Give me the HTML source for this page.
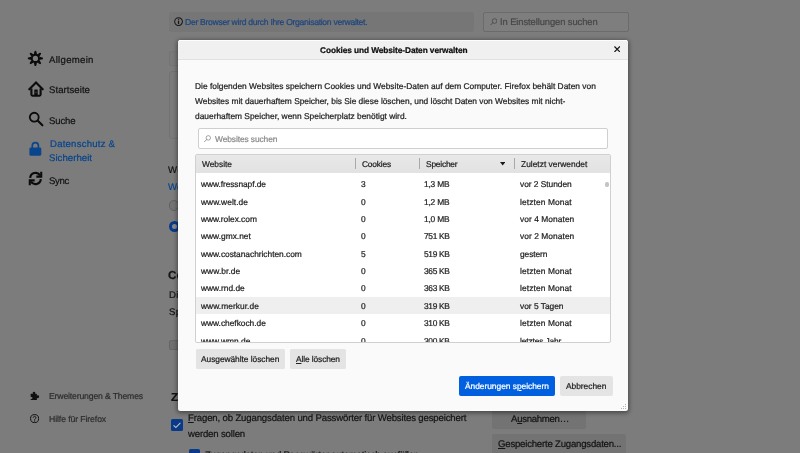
<!DOCTYPE html>
<html lang="de">
<head>
<meta charset="utf-8">
<title>Einstellungen</title>
<style>
html,body{margin:0;padding:0;}
body{width:800px;height:453px;overflow:hidden;position:relative;background:#7c7c7c;font-family:"Liberation Sans",sans-serif;}
.t{position:absolute;text-rendering:geometricPrecision;will-change:transform;-webkit-text-stroke:0.22px;white-space:pre;line-height:1;font-family:"Liberation Sans",sans-serif;}
.t u{text-decoration:underline;text-underline-offset:1px;text-decoration-thickness:0.6px;}
.abs{position:absolute;}
#clip{position:absolute;left:0;top:0;width:800px;height:342px;overflow:hidden;}
</style>
</head>
<body>
<!-- ===== dimmed page behind ===== -->
<!-- policy banner -->
<div class="abs" style="left:169.4px;top:12px;width:304.3px;height:19.6px;background:#767676;border-radius:2px;"></div>
<!-- search box -->
<div class="abs" style="left:483.4px;top:12px;width:145.8px;height:20px;box-sizing:border-box;border:1px solid #6b6b6b;border-radius:2px;background:#7e7e7e;"></div>
<!-- cards behind dialog left edge -->
<div class="abs" style="left:168.5px;top:50.5px;width:300px;height:15.5px;box-sizing:border-box;border:1px solid #747474;border-radius:2px;background:#797979;"></div>
<div class="abs" style="left:168.5px;top:71px;width:300px;height:68px;box-sizing:border-box;border:1px solid #727272;border-radius:3px;background:#7a7a7a;"></div>
<!-- radios -->
<div class="abs" style="left:168.5px;top:200px;width:10.6px;height:10.6px;box-sizing:border-box;border:1px solid #5f5f5f;border-radius:50%;background:#747474;"></div>
<div class="abs" style="left:168.5px;top:221px;width:11.4px;height:11.4px;box-sizing:border-box;border:3.2px solid #093a8a;border-radius:50%;background:#8a8a8a;"></div>
<!-- small button behind -->
<div class="abs" style="left:169.2px;top:339.5px;width:60px;height:10.5px;box-sizing:border-box;border:1px solid #666666;border-radius:2px;background:#707070;"></div>
<!-- checkbox 1 -->
<div class="abs" style="left:171.1px;top:419.3px;width:11.7px;height:11.7px;border-radius:1.6px;background:#093a8a;"></div>
<svg class="abs" style="left:171.1px;top:419.3px" width="11.7" height="11.7" viewBox="0 0 11.7 11.7"><path d="M2.5 6.3 L4.9 8.5 L9.4 4.0" fill="none" stroke="#bcbcbc" stroke-width="1.05"/></svg>
<!-- checkbox 2 (cut off) -->
<div class="abs" style="left:189px;top:448.9px;width:11.2px;height:11.7px;border-radius:1.6px;background:#093a8a;"></div>
<!-- page buttons -->
<div class="abs" style="left:492px;top:409px;width:94px;height:19.5px;border-radius:2px;background:#737373;"></div>
<div class="abs" style="left:492px;top:434.3px;width:134.2px;height:19.5px;border-radius:2px;background:#737373;"></div>

<!-- sidebar icons -->
<!-- gear -->
<svg class="abs" style="left:27.1px;top:50.05px" width="16.8" height="16.8" viewBox="-8 -8 16 16">
 <circle r="3.45" fill="none" stroke="#0b0b0b" stroke-width="1.9"/>
 <g fill="#0b0b0b"><path d="M-1.5 -3.9 L-0.85 -6.7 Q-0.8 -7.25 0 -7.25 Q0.8 -7.25 0.85 -6.7 L1.5 -3.9 Z" transform="rotate(0)"/><path d="M-1.5 -3.9 L-0.85 -6.7 Q-0.8 -7.25 0 -7.25 Q0.8 -7.25 0.85 -6.7 L1.5 -3.9 Z" transform="rotate(45)"/><path d="M-1.5 -3.9 L-0.85 -6.7 Q-0.8 -7.25 0 -7.25 Q0.8 -7.25 0.85 -6.7 L1.5 -3.9 Z" transform="rotate(90)"/><path d="M-1.5 -3.9 L-0.85 -6.7 Q-0.8 -7.25 0 -7.25 Q0.8 -7.25 0.85 -6.7 L1.5 -3.9 Z" transform="rotate(135)"/><path d="M-1.5 -3.9 L-0.85 -6.7 Q-0.8 -7.25 0 -7.25 Q0.8 -7.25 0.85 -6.7 L1.5 -3.9 Z" transform="rotate(180)"/><path d="M-1.5 -3.9 L-0.85 -6.7 Q-0.8 -7.25 0 -7.25 Q0.8 -7.25 0.85 -6.7 L1.5 -3.9 Z" transform="rotate(225)"/><path d="M-1.5 -3.9 L-0.85 -6.7 Q-0.8 -7.25 0 -7.25 Q0.8 -7.25 0.85 -6.7 L1.5 -3.9 Z" transform="rotate(270)"/><path d="M-1.5 -3.9 L-0.85 -6.7 Q-0.8 -7.25 0 -7.25 Q0.8 -7.25 0.85 -6.7 L1.5 -3.9 Z" transform="rotate(315)"/></g>
</svg>
<!-- home -->
<svg class="abs" style="left:27.7px;top:80.9px" width="16" height="16" viewBox="0 0 16 16">
 <path d="M1.3 8.3 L8 1.6 L14.7 8.3" fill="none" stroke="#0b0b0b" stroke-width="2.1" stroke-linejoin="miter" stroke-linecap="round"/>
 <path d="M3.4 7.4V13.6a1.1 1.1 0 0 0 1.1 1.1H11.5a1.1 1.1 0 0 0 1.1-1.1V7.4" fill="none" stroke="#0b0b0b" stroke-width="2.1"/>
 <rect x="6.3" y="8.5" width="3.4" height="6.3" rx="0.5" fill="#0b0b0b"/>
 <rect x="7.5" y="10.6" width="1.1" height="1.5" fill="#4a4a4a"/>
</svg>
<!-- search -->
<svg class="abs" style="left:28px;top:111px" width="16" height="16" viewBox="0 0 16 16">
 <circle cx="6.25" cy="6.2" r="4.45" fill="none" stroke="#0b0b0b" stroke-width="1.8"/>
 <path d="M9.6 9.6 L14.4 14.3" stroke="#0b0b0b" stroke-width="2.1" stroke-linecap="round"/>
</svg>
<!-- lock -->
<svg class="abs" style="left:28px;top:141px" width="16" height="16" viewBox="0 0 16 16">
 <rect x="1.4" y="6.5" width="11.9" height="8.2" rx="1.4" fill="#08458c"/>
 <path d="M4.3 7V4.6a3.05 3.05 0 0 1 6.1 0V7" fill="none" stroke="#08458c" stroke-width="1.7"/>
</svg>
<!-- sync -->
<svg class="abs" style="left:28px;top:171px" width="15" height="15" viewBox="0 0 16 16">
 <g fill="none" stroke="#0b0b0b" stroke-width="2.3">
  <path d="M2.3 7.3A5.8 5.8 0 0 1 12.9 4.6"/>
  <path d="M13.7 8.7A5.8 5.8 0 0 1 3.1 11.4"/>
  <path d="M14.1 0.9V6H8.9" stroke-width="2.2"/>
  <path d="M1.9 15.1V10H7.1" stroke-width="2.2"/>
 </g>
</svg>
<!-- puzzle -->
<svg class="abs" style="left:30.3px;top:390.6px" width="9.8" height="9.8" viewBox="0 0 9.8 9.8">
 <rect x="0.7" y="2.7" width="6.2" height="6.9" rx="0.5" fill="#101010"/>
 <circle cx="4.0" cy="2.0" r="1.3" fill="#101010"/>
 <circle cx="7.7" cy="5.8" r="1.45" fill="#101010"/>
 <circle cx="1.5" cy="7.0" r="0.95" fill="#7c7c7c"/>
 <rect x="0" y="6.2" width="1.5" height="1.6" fill="#7c7c7c"/>
</svg>
<!-- help -->
<svg class="abs" style="left:30px;top:413.6px" width="9.2" height="9.2" viewBox="0 0 16 16">
 <circle cx="8" cy="8" r="7" fill="none" stroke="#101010" stroke-width="1.7"/>
 <path d="M5.700 6.300a2.300 2.300 0 1 1 3.500 2c-.8.500-1.200.9-1.200 1.800" fill="none" stroke="#101010" stroke-width="1.700"/>
 <circle cx="8" cy="12.100" r="1.100" fill="#101010"/>
</svg>
<!-- info icon -->
<svg class="abs" style="left:174.1px;top:16.9px" width="9.1" height="9.1" viewBox="0 0 16 16">
 <circle cx="8" cy="8" r="6.8" fill="none" stroke="#141414" stroke-width="1.8"/>
 <rect x="6.900" y="7" width="2.200" height="5.200" fill="#141414"/><rect x="6.900" y="3.800" width="2.200" height="2.100" fill="#141414"/>
</svg>
<!-- search-box magnifier -->
<svg class="abs" style="left:489.8px;top:17.7px" width="7.6" height="7.6" viewBox="0 0 16 16">
 <circle cx="9.6" cy="6.4" r="5" fill="none" stroke="#4a4a4a" stroke-width="1.7"/>
 <path d="M6 10 L1 15" stroke="#4a4a4a" stroke-width="1.9" stroke-linecap="round"/>
</svg>

<span class="t" style="left:49.01px;top:56px;font-size:9.60px;letter-spacing:0.283px;color:#141414;font-weight:400;">Allgemein</span>
<span class="t" style="left:49.21px;top:86px;font-size:9.60px;letter-spacing:0.045px;color:#141414;font-weight:400;">Startseite</span>
<span class="t" style="left:49.11px;top:117px;font-size:9.60px;letter-spacing:-0.164px;color:#141414;font-weight:400;">Suche</span>
<span class="t" style="left:49.51px;top:140px;font-size:9.60px;letter-spacing:0.213px;color:#08458c;font-weight:400;">Datenschutz &amp;</span>
<span class="t" style="left:49.31px;top:154px;font-size:9.60px;letter-spacing:0.041px;color:#08458c;font-weight:400;">Sicherheit</span>
<span class="t" style="left:49.21px;top:177px;font-size:9.60px;letter-spacing:-0.311px;color:#141414;font-weight:400;">Sync</span>
<span class="t" style="left:48.73px;top:392px;font-size:8.70px;letter-spacing:-0.178px;color:#2e2e2e;font-weight:400;">Erweiterungen &amp; Themes</span>
<span class="t" style="left:48.73px;top:415px;font-size:8.70px;letter-spacing:-0.105px;color:#2e2e2e;font-weight:400;">Hilfe für Firefox</span>
<span class="t" style="left:185.43px;top:18px;font-size:8.60px;letter-spacing:-0.294px;color:#1e467f;font-weight:400;">Der Browser wird durch Ihre Organisation verwaltet.</span>
<span class="t" style="left:500.41px;top:17px;font-size:9.40px;letter-spacing:-0.088px;color:#474747;font-weight:400;">In Einstellungen suchen</span>
<span class="t" style="left:168.41px;top:166px;font-size:9.60px;letter-spacing:0.499px;color:#141414;font-weight:400;">Website</span>
<span class="t" style="left:168.41px;top:183px;font-size:9.60px;letter-spacing:0.157px;color:#08458c;font-weight:400;">Weitere</span>
<span class="t" style="left:168.47px;top:270px;font-size:11.60px;letter-spacing:0.125px;color:#141414;font-weight:700;">Cookies</span>
<span class="t" style="left:168.51px;top:291px;font-size:9.60px;letter-spacing:0.198px;color:#141414;font-weight:400;">Die</span>
<span class="t" style="left:168.51px;top:308px;font-size:9.60px;letter-spacing:0.264px;color:#141414;font-weight:400;">Speicher</span>
<span class="t" style="left:171.47px;top:392px;font-size:11.60px;letter-spacing:0.061px;color:#141414;font-weight:700;">Zugangsdaten</span>
<span class="t" style="left:187.81px;top:414px;font-size:9.60px;letter-spacing:-0.152px;color:#141414;font-weight:400;"><u>F</u>ragen, ob Zugangsdaten und Passwörter für Websites gespeichert</span>
<span class="t" style="left:187.81px;top:430px;font-size:9.60px;letter-spacing:-0.172px;color:#141414;font-weight:400;">werden sollen</span>
<span class="t" style="left:204.81px;top:451px;font-size:9.60px;letter-spacing:-0.250px;color:#141414;font-weight:400;">Zugangsdaten und Passwörter automatisch ausfüllen</span>
<span class="t" style="left:511.01px;top:415px;font-size:9.60px;letter-spacing:-0.286px;color:#141414;font-weight:400;">A<u>u</u>snahmen…</span>
<span class="t" style="left:497.51px;top:440px;font-size:9.60px;letter-spacing:-0.209px;color:#141414;font-weight:400;"><u>G</u>espeicherte Zugangsdaten...</span>

<!-- ===== dialog ===== -->
<div class="abs" style="left:178px;top:39.5px;width:450px;height:371.5px;border-radius:2.5px;background:#fafafa;box-shadow:0 1px 4px 0.5px rgba(0,0,0,0.42);"></div>
<div class="abs" style="left:178px;top:39.5px;width:450px;height:20px;border-radius:2.5px 2.5px 0 0;background:#f0f0f0;border-bottom:1px solid #e1e1e2;box-sizing:border-box;"></div>
<div class="abs" style="left:179px;top:39.5px;width:448px;height:1px;background:#fdfdfd;"></div>
<!-- close X -->
<svg class="abs" style="left:613.6px;top:46.1px" width="6.4" height="6.4" viewBox="0 0 7 7"><path d="M0.5 0.5L6.5 6.5M6.5 0.5L0.5 6.5" stroke="#151515" stroke-width="1.3" fill="none"/></svg>
<!-- search input -->
<div class="abs" style="left:198px;top:128px;width:410px;height:21px;box-sizing:border-box;border:1px solid #cfcfd1;border-radius:2px;background:#ffffff;"></div>
<svg class="abs" style="left:204px;top:134.700px" width="7.2" height="7.2" viewBox="0 0 16 16">
 <circle cx="9.6" cy="6.4" r="5" fill="none" stroke="#8a8a8a" stroke-width="1.7"/>
 <path d="M6 10 L1 15" stroke="#8a8a8a" stroke-width="1.9" stroke-linecap="round"/>
</svg>
<!-- table -->
<div class="abs" style="left:195px;top:154px;width:416px;height:189px;box-sizing:border-box;border:1px solid #d0d0d2;border-radius:2px;background:#ffffff;"></div>
<div class="abs" style="left:196px;top:155px;width:414px;height:18px;background:linear-gradient(#e8e8e8,#e2e2e2);"></div>
<div class="abs" style="left:355px;top:158px;width:1px;height:11px;background:#a9a9a9;"></div>
<div class="abs" style="left:418.600px;top:158px;width:1px;height:11px;background:#a9a9a9;"></div>
<div class="abs" style="left:514px;top:158px;width:1px;height:11px;background:#a9a9a9;"></div>
<svg class="abs" style="left:499.800px;top:162.300px" width="5.4" height="3.4" viewBox="0 0 5.4 3.4"><path d="M0 0H5.400L2.700 3.400Z" fill="#1a1a1a"/></svg>
<!-- hover row -->
<div class="abs" style="left:196px;top:297px;width:414px;height:17px;background:#efeff0;"></div>
<!-- scrollbar thumb -->
<div class="abs" style="left:605px;top:181.500px;width:3.500px;height:5.500px;border-radius:1.700px;background:#c4c4c4;"></div>
<!-- buttons -->
<div class="abs" style="left:195.500px;top:349px;width:89.500px;height:19.600px;border-radius:1.5px;background:#e4e4e5;"></div>
<div class="abs" style="left:290.300px;top:349px;width:55.700px;height:19.600px;border-radius:1.5px;background:#e4e4e5;"></div>
<div class="abs" style="left:459.200px;top:376.300px;width:95.400px;height:20px;border-radius:2px;background:#0060df;"></div>
<div class="abs" style="left:559.800px;top:376.300px;width:53.200px;height:20px;border-radius:2px;background:#e4e4e5;"></div>
<!-- resizer dots -->
<svg class="abs" style="left:619.500px;top:402.500px" width="7" height="7" viewBox="0 0 7 7" shape-rendering="crispEdges">
 <g fill="#b5b5b5"><rect x="5" y="1" width="1" height="1"/><rect x="3" y="3" width="1" height="1"/><rect x="5" y="3" width="1" height="1"/><rect x="1" y="5" width="1" height="1"/><rect x="3" y="5" width="1" height="1"/><rect x="5" y="5" width="1" height="1"/></g>
</svg>

<span class="t" style="left:320.33px;top:46px;font-size:8.30px;letter-spacing:-0.077px;color:#0c0c0d;font-weight:700;">Cookies und Website-Daten verwalten</span>
<span class="t" style="left:195.33px;top:82px;font-size:8.40px;letter-spacing:0.003px;color:#222223;font-weight:400;">Die folgenden Websites speichern Cookies und Website-Daten auf dem Computer. Firefox behält Daten von</span>
<span class="t" style="left:195.33px;top:97px;font-size:8.40px;letter-spacing:-0.013px;color:#222223;font-weight:400;">Websites mit dauerhaftem Speicher, bis Sie diese löschen, und löscht Daten von Websites mit nicht-</span>
<span class="t" style="left:195.33px;top:112px;font-size:8.40px;letter-spacing:0.001px;color:#222223;font-weight:400;">dauerhaftem Speicher, wenn Speicherplatz benötigt wird.</span>
<span class="t" style="left:214.83px;top:135px;font-size:8.40px;letter-spacing:-0.087px;color:#8a8a8a;font-weight:400;">Websites suchen</span>
<span class="t" style="left:202.33px;top:160px;font-size:8.40px;letter-spacing:-0.028px;color:#222223;font-weight:400;">Website</span>
<span class="t" style="left:362.33px;top:160px;font-size:8.40px;letter-spacing:-0.193px;color:#222223;font-weight:400;">Cookies</span>
<span class="t" style="left:425.83px;top:160px;font-size:8.40px;letter-spacing:-0.207px;color:#222223;font-weight:400;">Speicher</span>
<span class="t" style="left:521.33px;top:160px;font-size:8.40px;letter-spacing:0.012px;color:#222223;font-weight:400;">Zuletzt verwendet</span>
<span class="t" style="left:200.83px;top:355px;font-size:8.40px;letter-spacing:-0.047px;color:#222223;font-weight:400;">Ausgewählte löschen</span>
<span class="t" style="left:295.83px;top:355px;font-size:8.40px;letter-spacing:-0.108px;color:#222223;font-weight:400;"><u>A</u>lle löschen</span>
<span class="t" style="left:464.73px;top:382px;font-size:8.40px;letter-spacing:-0.022px;color:#ffffff;font-weight:400;">Änderungen s<u>p</u>eichern</span>
<span class="t" style="left:565.83px;top:382px;font-size:8.40px;letter-spacing:-0.026px;color:#222223;font-weight:400;">Abbrechen</span>
<div id="clip">
<span class="t" style="left:200.83px;top:180px;font-size:8.40px;letter-spacing:-0.081px;color:#222223;font-weight:400;">www.fressnapf.de</span>
<span class="t" style="left:360.53px;top:180px;font-size:8.40px;letter-spacing:-0.272px;color:#222223;font-weight:400;">3</span>
<span class="t" style="left:424.23px;top:180px;font-size:8.40px;letter-spacing:-0.185px;color:#222223;font-weight:400;">1,3 MB</span>
<span class="t" style="left:519.53px;top:180px;font-size:8.40px;letter-spacing:-0.031px;color:#222223;font-weight:400;">vor 2 Stunden</span>
<span class="t" style="left:200.83px;top:198px;font-size:8.40px;letter-spacing:0.029px;color:#222223;font-weight:400;">www.welt.de</span>
<span class="t" style="left:360.53px;top:198px;font-size:8.40px;letter-spacing:-0.272px;color:#222223;font-weight:400;">0</span>
<span class="t" style="left:424.23px;top:198px;font-size:8.40px;letter-spacing:-0.185px;color:#222223;font-weight:400;">1,2 MB</span>
<span class="t" style="left:519.53px;top:198px;font-size:8.40px;letter-spacing:0.113px;color:#222223;font-weight:400;">letzten Monat</span>
<span class="t" style="left:200.83px;top:215px;font-size:8.40px;letter-spacing:-0.037px;color:#222223;font-weight:400;">www.rolex.com</span>
<span class="t" style="left:360.53px;top:215px;font-size:8.40px;letter-spacing:-0.272px;color:#222223;font-weight:400;">0</span>
<span class="t" style="left:424.23px;top:215px;font-size:8.40px;letter-spacing:-0.185px;color:#222223;font-weight:400;">1,0 MB</span>
<span class="t" style="left:519.53px;top:215px;font-size:8.40px;letter-spacing:0.062px;color:#222223;font-weight:400;">vor 4 Monaten</span>
<span class="t" style="left:200.83px;top:232px;font-size:8.40px;letter-spacing:0.005px;color:#222223;font-weight:400;">www.gmx.net</span>
<span class="t" style="left:360.53px;top:232px;font-size:8.40px;letter-spacing:-0.272px;color:#222223;font-weight:400;">0</span>
<span class="t" style="left:424.23px;top:232px;font-size:8.40px;letter-spacing:-0.342px;color:#222223;font-weight:400;">751 KB</span>
<span class="t" style="left:519.53px;top:232px;font-size:8.40px;letter-spacing:0.062px;color:#222223;font-weight:400;">vor 2 Monaten</span>
<span class="t" style="left:200.83px;top:250px;font-size:8.40px;letter-spacing:-0.032px;color:#222223;font-weight:400;">www.costanachrichten.com</span>
<span class="t" style="left:360.53px;top:250px;font-size:8.40px;letter-spacing:-0.272px;color:#222223;font-weight:400;">5</span>
<span class="t" style="left:424.23px;top:250px;font-size:8.40px;letter-spacing:-0.342px;color:#222223;font-weight:400;">519 KB</span>
<span class="t" style="left:519.53px;top:250px;font-size:8.40px;letter-spacing:-0.088px;color:#222223;font-weight:400;">gestern</span>
<span class="t" style="left:200.83px;top:267px;font-size:8.40px;letter-spacing:0.072px;color:#222223;font-weight:400;">www.br.de</span>
<span class="t" style="left:360.53px;top:267px;font-size:8.40px;letter-spacing:-0.272px;color:#222223;font-weight:400;">0</span>
<span class="t" style="left:424.23px;top:267px;font-size:8.40px;letter-spacing:-0.342px;color:#222223;font-weight:400;">365 KB</span>
<span class="t" style="left:519.53px;top:267px;font-size:8.40px;letter-spacing:0.113px;color:#222223;font-weight:400;">letzten Monat</span>
<span class="t" style="left:200.83px;top:284px;font-size:8.40px;letter-spacing:0.001px;color:#222223;font-weight:400;">www.rnd.de</span>
<span class="t" style="left:360.53px;top:284px;font-size:8.40px;letter-spacing:-0.272px;color:#222223;font-weight:400;">0</span>
<span class="t" style="left:424.23px;top:284px;font-size:8.40px;letter-spacing:-0.342px;color:#222223;font-weight:400;">363 KB</span>
<span class="t" style="left:519.53px;top:284px;font-size:8.40px;letter-spacing:0.113px;color:#222223;font-weight:400;">letzten Monat</span>
<span class="t" style="left:200.83px;top:302px;font-size:8.40px;letter-spacing:0.045px;color:#222223;font-weight:400;">www.merkur.de</span>
<span class="t" style="left:360.53px;top:302px;font-size:8.40px;letter-spacing:-0.272px;color:#222223;font-weight:400;">0</span>
<span class="t" style="left:424.23px;top:302px;font-size:8.40px;letter-spacing:-0.342px;color:#222223;font-weight:400;">319 KB</span>
<span class="t" style="left:519.53px;top:302px;font-size:8.40px;letter-spacing:-0.013px;color:#222223;font-weight:400;">vor 5 Tagen</span>
<span class="t" style="left:200.83px;top:319px;font-size:8.40px;letter-spacing:-0.025px;color:#222223;font-weight:400;">www.chefkoch.de</span>
<span class="t" style="left:360.53px;top:319px;font-size:8.40px;letter-spacing:-0.272px;color:#222223;font-weight:400;">0</span>
<span class="t" style="left:424.23px;top:319px;font-size:8.40px;letter-spacing:-0.342px;color:#222223;font-weight:400;">310 KB</span>
<span class="t" style="left:519.53px;top:319px;font-size:8.40px;letter-spacing:0.113px;color:#222223;font-weight:400;">letzten Monat</span>
<span class="t" style="left:200.83px;top:337px;font-size:8.40px;letter-spacing:0.002px;color:#222223;font-weight:400;">www.wmn.de</span>
<span class="t" style="left:360.53px;top:337px;font-size:8.40px;letter-spacing:-0.272px;color:#222223;font-weight:400;">0</span>
<span class="t" style="left:424.23px;top:337px;font-size:8.40px;letter-spacing:-0.342px;color:#222223;font-weight:400;">300 KB</span>
<span class="t" style="left:519.53px;top:337px;font-size:8.40px;letter-spacing:-0.138px;color:#222223;font-weight:400;">letztes Jahr</span>
</div>
</body>
</html>
